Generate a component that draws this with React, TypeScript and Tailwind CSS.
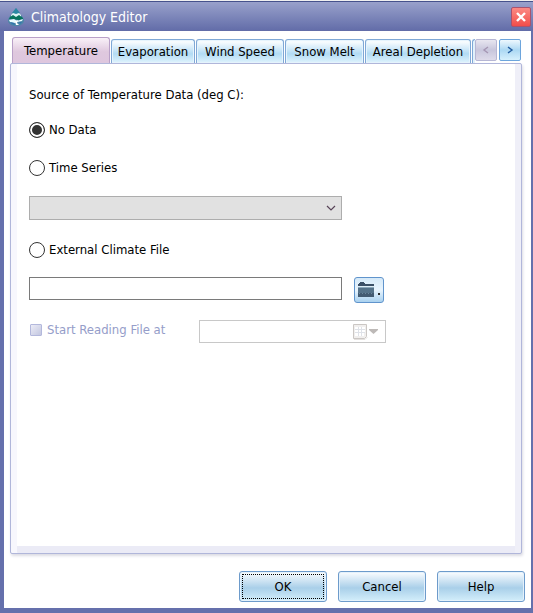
import { useState } from "react";
import type { ReactNode } from "react";
import clsx from "clsx";

const tabs = [
  { name: "Temperature", width: "w-[98px]" },
  { name: "Evaporation", width: "w-[84px]" },
  { name: "Wind Speed", width: "w-[88px]" },
  { name: "Snow Melt", width: "w-[79px]" },
  { name: "Areal Depletion", width: "w-[106px]" },
];

function AppIcon() {
  return (
    <svg width="16" height="20" viewBox="0 0 16 20" aria-hidden="true">
      <path d="M8 1 C7 4 1 9 0 13 C0 17 4 19 8 19 C12 19 16 17 16 13 C15 9 9 4 8 1Z" fill="#4c86a6" />
      <path d="M8 1 L4 6 L8 7 L12 6Z" fill="#2b87a3" />
      <path d="M3 8 L5 6 L8 7 L11 6 L13 8 L13 10 H3Z" fill="#dff5f5" />
      <path d="M2 10 L5 8 L8 10 L11 8 L15 11 V12 L11 13 L5 12 L1 12Z" fill="#08735e" />
      <path d="M1 13 L6 12 L9 14 L15 12 L14 14 L9 15 L7 16 L2 15Z" fill="#eafcff" />
      <path d="M7 14 L10 13 L9 16 L11 18 L8 18Z" fill="#ffffff" />
      <path d="M2 15 L6 16 L7 18 L4 17Z M11 15 L14 15 L12 17Z" fill="#2f74ae" />
    </svg>
  );
}

function CloseIcon() {
  return (
    <svg width="10" height="10" viewBox="0 0 10 10" aria-hidden="true">
      <path d="M1 1 L9 9 M9 1 L1 9" stroke="#fff" strokeWidth="2.4" />
    </svg>
  );
}

function FolderIcon() {
  return (
    <svg width="24" height="18" viewBox="0 0 24 18" aria-hidden="true">
      <path d="M0 3 H1 V2 H2 V1 H6 V2 H7 V3 H16 V5 H0Z" fill="#3a4f66" />
      <rect y="5" width="16" height="1" fill="#dcebf5" />
      <rect y="6" width="16" height="1" fill="#8aa7ba" />
      <rect y="7" width="16" height="5" fill="#557289" />
      <rect y="12" width="16" height="4" fill="#435b72" />
      <path d="M1 12.5 H16" stroke="#6b879c" strokeDasharray="1 2" />
      <rect x="20" y="12" width="2" height="2" fill="#2b2b2b" />
    </svg>
  );
}

function CalendarIcon() {
  return (
    <svg width="26" height="16" viewBox="0 0 26 16" aria-hidden="true">
      <path d="M.5 .5 H13.5 V12.5 L11.5 14.5 H.5Z" fill="#f1efee" stroke="#cbc7c4" />
      <path d="M1 15.5 H12 L14.5 13" fill="none" stroke="#e4e1df" />
      <path d="M2 3h3v2H2z M6 3h2v2H6z M9 3h3v2H9z M2 6h3v2H2z M6 6h2v2H6z M9 6h3v2H9z M2 9h3v3H2z M6 9h2v3H6z M9 9h2v3H9z" fill="#fff" />
      <path d="M2 5.5 H12 M2 8.5 H12 M5.5 3 V12 M8.5 3 V12" stroke="#dfe2e8" />
      <path d="M16 5 H25 V6 L20.5 10 L16 6Z" fill="#bdb9b7" />
    </svg>
  );
}

function Chevron({ points }: { points: string }) {
  return (
    <svg width="10" height="10" viewBox="0 0 10 10" aria-hidden="true">
      <polyline points={points} fill="none" stroke="currentColor" strokeWidth="1.4" />
    </svg>
  );
}

function FooterButton({ children, focused }: { children: ReactNode; focused?: boolean }) {
  return (
    <button
      type="button"
      className="h-[31px] w-[88px] rounded-[3px] border border-[#6d9bcb] bg-linear-to-b from-[#f4f9fd] from-5% via-[#a9cfe9] via-55% to-[#d4effb] p-0.5 shadow-[inset_0_0_0_1px_#e4f1fb]"
    >
      <span
        className={clsx(
          "flex h-full items-center justify-center border",
          focused ? "border-dotted border-black" : "border-transparent"
        )}
      >
        {children}
      </span>
    </button>
  );
}

function RadioRow({ label, value, source, onChange }: {
  label: string;
  value: string;
  source: string;
  onChange: (value: string) => void;
}) {
  return (
    <label className="flex h-4 items-center gap-1">
      <input
        type="radio"
        name="source"
        value={value}
        checked={source === value}
        onChange={() => onChange(value)}
        className="size-4 appearance-none rounded-full border border-[#333] bg-white checked:bg-[#333] checked:shadow-[inset_0_0_0_2px_#fff]"
      />
      {label}
    </label>
  );
}

export default function App() {
  const [activeTab, setActiveTab] = useState("Temperature");
  const [source, setSource] = useState("none");

  return (
    <div className="flex min-h-screen flex-col border-t border-[#f0f0f0] bg-[#6570ac] font-['DejaVu_Sans_Condensed','DejaVu_Sans',sans-serif] text-[13px] leading-4 text-black">
      {/* Title bar */}
      <header className="flex h-[30px] items-center border-t border-[#46528c] bg-linear-to-b from-[#99a1cb] to-[#626ca8] pr-0.5 pl-2">
        <AppIcon />
        <h1 className="ml-[7px] flex-1 text-[14px] text-white">Climatology Editor</h1>
        <button
          type="button"
          aria-label="Close"
          className="flex h-5 w-5 items-center justify-center rounded-[2px] border border-[#a9536e] bg-linear-to-b from-[#fb8984] to-[#f14c49]"
        >
          <CloseIcon />
        </button>
      </header>

      <main className="mr-0.5 mb-[5px] ml-1 flex flex-1 flex-col bg-white pt-1.5 pr-1.5 pb-1.5 pl-1.5">
        {/* Tab strip */}
        <div className="flex h-[26px] items-end pl-0.5">
          <div role="tablist" className="flex min-w-0 flex-1 items-end gap-px overflow-hidden">
            {tabs.map((tab) => (
              <button
                key={tab.name}
                type="button"
                role="tab"
                aria-selected={activeTab === tab.name}
                onClick={() => setActiveTab(tab.name)}
                className={clsx(
                  "shrink-0 rounded-t-[3px] border border-b-0 whitespace-nowrap",
                  tab.width,
                  activeTab === tab.name
                    ? "h-[26px] border-[#b9a0c8] bg-linear-to-b from-[#f9f1f8] via-[#dfc8de] via-55% to-[#dec6de]"
                    : "h-6 border-[#7fa8d6] bg-linear-to-b from-[#f6fbfe] from-10% via-[#b2dbf4] via-60% to-[#e0f4fd] shadow-[inset_0_0_0_1px_#e6f4fd]"
                )}
              >
                {tab.name}
              </button>
            ))}
            <span className="h-6 w-2 rounded-tl-[3px] border-t border-l border-[#7fa8d6] bg-[#e1f1fb]" />
          </div>
          <div className="mb-0.5 flex gap-0.5 pr-1">
            <button
              type="button"
              disabled
              aria-label="Previous tabs"
              className="flex h-[22px] w-[22px] items-center justify-center rounded-[2px] border border-[#b6b6d4] bg-linear-to-b from-[#e8e6f0] via-[#c8c6dc] to-[#dedbea] text-[#a596b3]"
            >
              <Chevron points="7,2 3,5 7,8" />
            </button>
            <button
              type="button"
              aria-label="Next tabs"
              className="flex h-[22px] w-[22px] items-center justify-center rounded-[2px] border border-[#6da5dc] bg-linear-to-b from-[#eef8fe] via-[#acd8f3] to-[#d6f0fd] text-[#235da0]"
            >
              <Chevron points="3,2 7,5 3,8" />
            </button>
          </div>
        </div>

        {/* Temperature page */}
        <section className="mr-[3px] flex-1 rounded-[2px] border border-[#b0b6da] bg-white shadow-[1px_2px_3px_#dcdce4,inset_6px_0_0_#f7f7fd,inset_-6px_0_0_#efeff8,inset_0_-7px_0_#ebebf6]">
          <fieldset className="px-[18px] pt-[23px]">
            <legend className="float-left mb-[19px]">Source of Temperature Data (deg C):</legend>
            <div className="clear-both flex flex-col gap-[22px]">
              <RadioRow label="No Data" value="none" source={source} onChange={setSource} />
              <RadioRow label="Time Series" value="series" source={source} onChange={setSource} />
            </div>
            <div className="relative mt-5 w-full max-w-[313px]">
              <select
                disabled
                aria-label="Time Series"
                className="block h-6 w-full appearance-none border border-[#adadad] bg-[#e1e1e1] opacity-100"
              />
              <svg className="pointer-events-none absolute top-2 right-1.5" width="10" height="8" viewBox="0 0 10 8" aria-hidden="true">
                <path d="M1 2 L5 6 L9 2" fill="none" stroke="#584458" strokeWidth="1.2" />
              </svg>
            </div>
            <div className="mt-[22px]">
              <RadioRow label="External Climate File" value="file" source={source} onChange={setSource} />
            </div>
            <div className="mt-[19px] flex items-start gap-3">
              <input
                type="text"
                aria-label="External Climate File"
                className="h-[23px] w-full max-w-[313px] border border-[#7a7a7a] bg-white px-1"
              />
              <button
                type="button"
                aria-label="Browse"
                className="flex h-[26px] w-[30px] shrink-0 items-center rounded-[3px] border border-[#6094cc] bg-linear-to-b from-[#d5e9f8] via-[#e8f4fd] to-[#a9d1ef] pl-[3px]"
              >
                <FolderIcon />
              </button>
            </div>
            <div className="mt-[17px] flex items-start">
              <label className="flex h-5 w-[170px] shrink-0 items-center gap-[5px] text-[#959dc9]">
                <input
                  type="checkbox"
                  disabled
                  className="ml-px size-3 appearance-none rounded-[1px] border border-[#b3b8dc] bg-linear-to-br from-[#ececf6] to-[#c3c7e0]"
                />
                Start Reading File at
              </label>
              <div className="flex h-[23px] w-[187px] items-center border border-[#c8c8c8] bg-white pr-1.5">
                <input type="text" disabled aria-label="Start date" className="min-w-0 flex-1 px-1" />
                <button type="button" disabled aria-label="Choose date">
                  <CalendarIcon />
                </button>
              </div>
            </div>
          </fieldset>
        </section>

        {/* Dialog buttons */}
        <footer className="mt-[17px] flex justify-end gap-[11px]">
          <FooterButton focused>OK</FooterButton>
          <FooterButton>Cancel</FooterButton>
          <FooterButton>Help</FooterButton>
        </footer>
      </main>
    </div>
  );
}
